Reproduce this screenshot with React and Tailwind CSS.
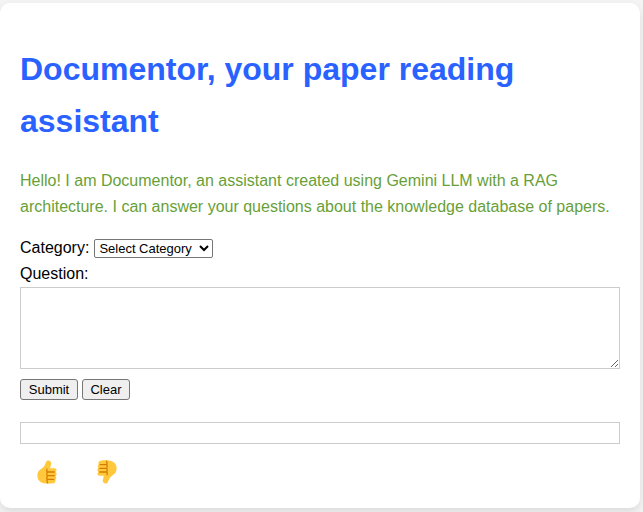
import React from "react";

function ThumbIcon({ className }) {
  return (
    <svg viewBox="0 0 20 24" className={className} aria-hidden="true">
      <path
        d="M9.200 1.700C10-.1 14.200-.1 14.200 3.200c0 1.700-.9 3.500-1 5h4.300c2.400 0 2.600 3 1 3.800 1.500.7 1.500 3.200 0 3.900 1.200.7 1 3-.4 3.600 1 1 .4 3.500-1.700 3.800-3 .4-6.600.5-9.300 0C3 22.600.4 20 .4 15.800c0-4 1.700-5.500 4.300-7.200C7.300 6.900 8.200 4 9.200 1.700Z"
        fill="#ffc83d"
      />
      <path
        d="M10 9.200c-.5 1-.4 2 .2 2.800-.5 1.200-.5 2.500 0 3.700-.5 1.200-.5 2.500 0 3.700-.4 1.200-.3 2.400.3 3.400M10.500 12h6.800M10.500 15.700h6.800M10.500 19.400h6.300"
        fill="none"
        stroke="#d67d00"
        strokeWidth="1.300"
        strokeLinecap="round"
      />
    </svg>
  );
}

export default function App() {
  const button =
    "h-[21px] rounded-[3px] border border-[#767676] bg-[#efefef] px-[7px] text-[13px] leading-[19px] text-black";
  return (
    <div className="min-h-screen bg-[#f4f4f4] pt-[3px] pr-[3px] font-['Liberation_Sans',Arial,sans-serif] text-base leading-[26px] text-black">
      <main className="rounded-[10px] bg-white p-5 shadow-[0_4px_8px_rgba(0,0,0,0.1)]">
        <h1 className="mt-5 text-[32px] leading-[52px] font-bold text-[#2962ff]">
          Documentor, your paper reading assistant
        </h1>
        <p className="mt-[21px] text-[#689f38]">
          Hello! I am Documentor, an assistant created using Gemini LLM with a RAG architecture. I can
          answer your questions about the knowledge database of papers.
        </p>
        <form className="mt-[15px]" onSubmit={(e) => e.preventDefault()}>
          <div className="flex items-center gap-[5px]">
            <label htmlFor="category">Category:</label>
            <select
              id="category"
              className="h-[19px] w-[119px] rounded-[2px] border border-[#767676] bg-white text-[13px]"
            >
              <option>Select Category</option>
            </select>
          </div>
          <label htmlFor="question" className="block">
            Question:
          </label>
          <textarea
            id="question"
            className="block h-[82px] w-full resize border border-[#ccc] p-2.5"
          />
          <div className="mt-2.5 flex gap-1">
            <button type="submit" className={`${button} w-[58px]`}>
              Submit
            </button>
            <button type="reset" className={`${button} w-12`}>
              Clear
            </button>
          </div>
        </form>
        <output className="mt-[22px] block h-[22px] border border-[#ccc]" />
        <div className="mt-4 flex gap-10 pl-[17px]">
          <button type="button" aria-label="Thumbs up" className="h-7 w-5">
            <ThumbIcon className="mb-1 h-6 w-5" />
          </button>
          <button type="button" aria-label="Thumbs down" className="h-7 w-5">
            <ThumbIcon className="mb-1 h-6 w-5 rotate-180" />
          </button>
        </div>
      </main>
    </div>
  );
}
